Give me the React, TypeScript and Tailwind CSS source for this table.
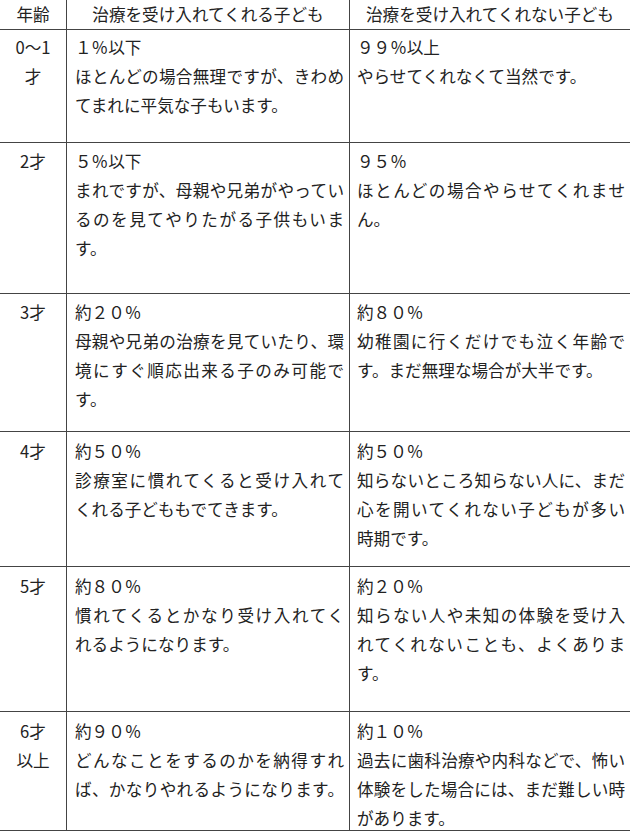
import React from 'react';

type Line = { t: string; full?: boolean };

type Row = {
  age: string[];
  yes: Line[];
  no: Line[];
  h: string;
  pt: string;
};

const rows: Row[] = [
  {
    age: ['0～1', '才'],
    yes: [
      { t: '１％以下' },
      { t: 'ほとんどの場合無理ですが、きわめ', full: true },
      { t: 'てまれに平気な子もいます。' },
    ],
    no: [{ t: '９９％以上' }, { t: 'やらせてくれなくて当然です。' }],
    h: 'h-[113px]',
    pt: 'pt-[3px]',
  },
  {
    age: ['2才'],
    yes: [
      { t: '５％以下' },
      { t: 'まれですが、母親や兄弟がやってい', full: true },
      { t: 'るのを見てやりたがる子供もいま', full: true },
      { t: 'す。' },
    ],
    no: [
      { t: '９５％' },
      { t: 'ほとんどの場合やらせてくれませ', full: true },
      { t: 'ん。' },
    ],
    h: 'h-[151px]',
    pt: 'pt-[4px]',
  },
  {
    age: ['3才'],
    yes: [
      { t: '約２０％' },
      { t: '母親や兄弟の治療を見ていたり、環', full: true },
      { t: '境にすぐ順応出来る子のみ可能で', full: true },
      { t: 'す。' },
    ],
    no: [
      { t: '約８０％' },
      { t: '幼稚園に行くだけでも泣く年齢で', full: true },
      { t: 'す。まだ無理な場合が大半です。' },
    ],
    h: 'h-[138px]',
    pt: 'pt-[4px]',
  },
  {
    age: ['4才'],
    yes: [
      { t: '約５０％' },
      { t: '診療室に慣れてくると受け入れて', full: true },
      { t: 'くれる子どももでてきます。' },
    ],
    no: [
      { t: '約５０％' },
      { t: '知らないところ知らない人に、まだ', full: true },
      { t: '心を開いてくれない子どもが多い', full: true },
      { t: '時期です。' },
    ],
    h: 'h-[135px]',
    pt: 'pt-[5px]',
  },
  {
    age: ['5才'],
    yes: [
      { t: '約８０％' },
      { t: '慣れてくるとかなり受け入れてく', full: true },
      { t: 'れるようになります。' },
    ],
    no: [
      { t: '約２０％' },
      { t: '知らない人や未知の体験を受け入', full: true },
      { t: 'れてくれないことも、よくありま', full: true },
      { t: 'す。' },
    ],
    h: 'h-[145px]',
    pt: 'pt-[5px]',
  },
  {
    age: ['6才', '以上'],
    yes: [
      { t: '約９０％' },
      { t: 'どんなことをするのかを納得すれ', full: true },
      { t: 'ば、かなりやれるようになります。', full: true },
    ],
    no: [
      { t: '約１０％' },
      { t: '過去に歯科治療や内科などで、怖い', full: true },
      { t: '体験をした場合には、まだ難しい時', full: true },
      { t: 'があります。' },
    ],
    h: 'h-[119px]',
    pt: 'pt-[5px]',
  },
];

function Lines({ lines }: { lines: Line[] }) {
  return (
    <>
      {lines.map((l, i) => (
        <div key={i} className={l.full ? 'text-justify [text-align-last:justify]' : ''}>
          {l.t}
        </div>
      ))}
    </>
  );
}

export default function App() {
  return (
    <div
      className="w-[630px] h-[831px] overflow-hidden bg-white text-[#222] text-[16.6px] leading-[29px]"
      style={{ fontFamily: '"Noto Sans CJK JP", "Noto Sans", sans-serif' }}
    >
      <div className="grid grid-cols-[67px_283px_280px]">
        {/* Header */}
        <div className="h-[30px] border-b border-r border-[#444] flex items-center justify-center">年齢</div>
        <div className="h-[30px] border-b border-r border-[#444] flex items-center justify-center">
          治療を受け入れてくれる子ども
        </div>
        <div className="h-[30px] border-b border-[#444] flex items-center justify-center">
          治療を受け入れてくれない子ども
        </div>

        {rows.map((r, i) => (
          <React.Fragment key={i}>
            <div className={`${r.h} ${r.pt} border-b border-r border-[#444] text-center`}>
              {r.age.map((a, j) => (
                <div key={j}>{a}</div>
              ))}
            </div>
            <div className={`${r.h} ${r.pt} border-b border-r border-[#444] pl-[8px] pr-[5px]`}>
              <Lines lines={r.yes} />
            </div>
            <div className={`${r.h} ${r.pt} border-b border-[#444] pl-[7px] pr-[5px]`}>
              <Lines lines={r.no} />
            </div>
          </React.Fragment>
        ))}
      </div>
    </div>
  );
}
